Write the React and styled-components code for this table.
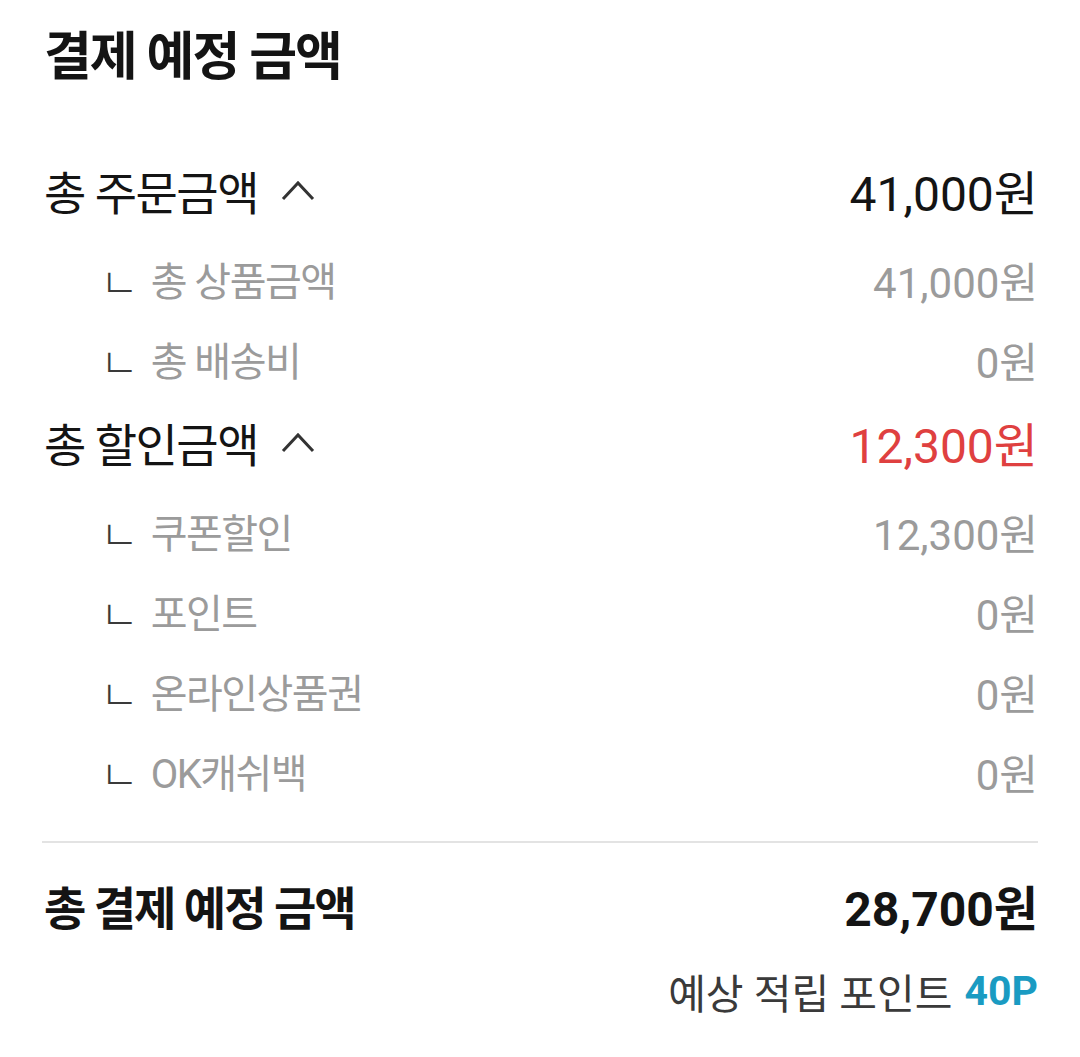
import React from 'react';
import styled, { createGlobalStyle } from 'styled-components';

const GlobalStyle = createGlobalStyle`
  html, body {
    margin: 0;
    padding: 0;
    background: #fff;
  }
  body {
    font-family: Roboto, "Noto Sans CJK KR", sans-serif;
    color: #141414;
  }
`;

const Page = styled.div`
  width: 1080px;
  padding: 22px 42px 0 44px;
  box-sizing: border-box;
`;

const Title = styled.h1`
  margin: 0 0 53px;
  font-size: 52px;
  font-weight: 700;
  letter-spacing: -2px;
  line-height: 72px;
`;

const Group = styled.div`
  display: flex;
  flex-direction: column;
`;

const Row = styled.div`
  display: flex;
  align-items: center;
  justify-content: space-between;
  height: ${p => (p.$sub ? '80px' : '86px')};
  margin-bottom: ${p => (p.$sub ? '0' : '6px')};
`;

const Label = styled.div`
  display: flex;
  align-items: center;
  font-size: ${p => (p.$sub ? '40px' : '46px')};
  letter-spacing: -1.5px;
  color: ${p => (p.$sub ? '#9b9b9b' : '#141414')};
  padding-left: ${p => (p.$sub ? '56px' : '0')};
`;

const Mark = styled.span`
  font-size: 42px;
  font-weight: 300;
  color: #3a3a3a;
  margin-right: 12px;
  letter-spacing: 0;
`;

const Amount = styled.div`
  font-size: ${p => (p.$sub ? '42px' : '48px')};
  color: ${p => p.$color || '#141414'};
`;

const Chevron = styled.svg`
  margin-left: 22px;
  width: 36px;
  height: 24px;
`;

const Divider = styled.hr`
  border: none;
  border-top: 2px solid #e3e3e3;
  margin: 30px 0 22px -2px;
`;

const TotalRow = styled.div`
  display: flex;
  align-items: center;
  justify-content: space-between;
  height: 80px;
`;

const TotalLabel = styled.div`
  font-size: 46px;
  font-weight: 700;
  letter-spacing: -2px;
`;

const TotalAmount = styled.div`
  font-size: 48px;
  font-weight: 700;
`;

const PointRow = styled.div`
  display: flex;
  justify-content: flex-end;
  align-items: center;
  height: 50px;
  margin-top: 21px;
  font-size: 41px;
  color: #3a3a3a;
`;

const PointValue = styled.span`
  margin-left: 12px;
  color: #1a9bc2;
  font-weight: 700;
`;

function Up() {
  return (
    <Chevron viewBox="0 0 36 24">
      <polyline points="3,21 18,5 33,21" fill="none" stroke="#333" strokeWidth="3" />
    </Chevron>
  );
}

const sections = [
  {
    label: '총 주문금액',
    amount: '41,000원',
    items: [
      ['총 상품금액', '41,000원'],
      ['총 배송비', '0원'],
    ],
  },
  {
    label: '총 할인금액',
    amount: '12,300원',
    color: '#df4040',
    items: [
      ['쿠폰할인', '12,300원'],
      ['포인트', '0원'],
      ['온라인상품권', '0원'],
      ['OK캐쉬백', '0원'],
    ],
  },
];

export default function App() {
  return (
    <Page>
      <GlobalStyle />
      <Title>결제 예정 금액</Title>
      {sections.map(s => (
        <Group key={s.label}>
          <Row>
            <Label>
              {s.label}
              <Up />
            </Label>
            <Amount $color={s.color}>{s.amount}</Amount>
          </Row>
          {s.items.map(([name, value]) => (
            <Row $sub key={name}>
              <Label $sub>
                <Mark>ㄴ</Mark>
                {name}
              </Label>
              <Amount $sub $color="#9b9b9b">{value}</Amount>
            </Row>
          ))}
        </Group>
      ))}
      <Divider />
      <TotalRow>
        <TotalLabel>총 결제 예정 금액</TotalLabel>
        <TotalAmount>28,700원</TotalAmount>
      </TotalRow>
      <PointRow>
        예상 적립 포인트
        <PointValue>40P</PointValue>
      </PointRow>
    </Page>
  );
}
